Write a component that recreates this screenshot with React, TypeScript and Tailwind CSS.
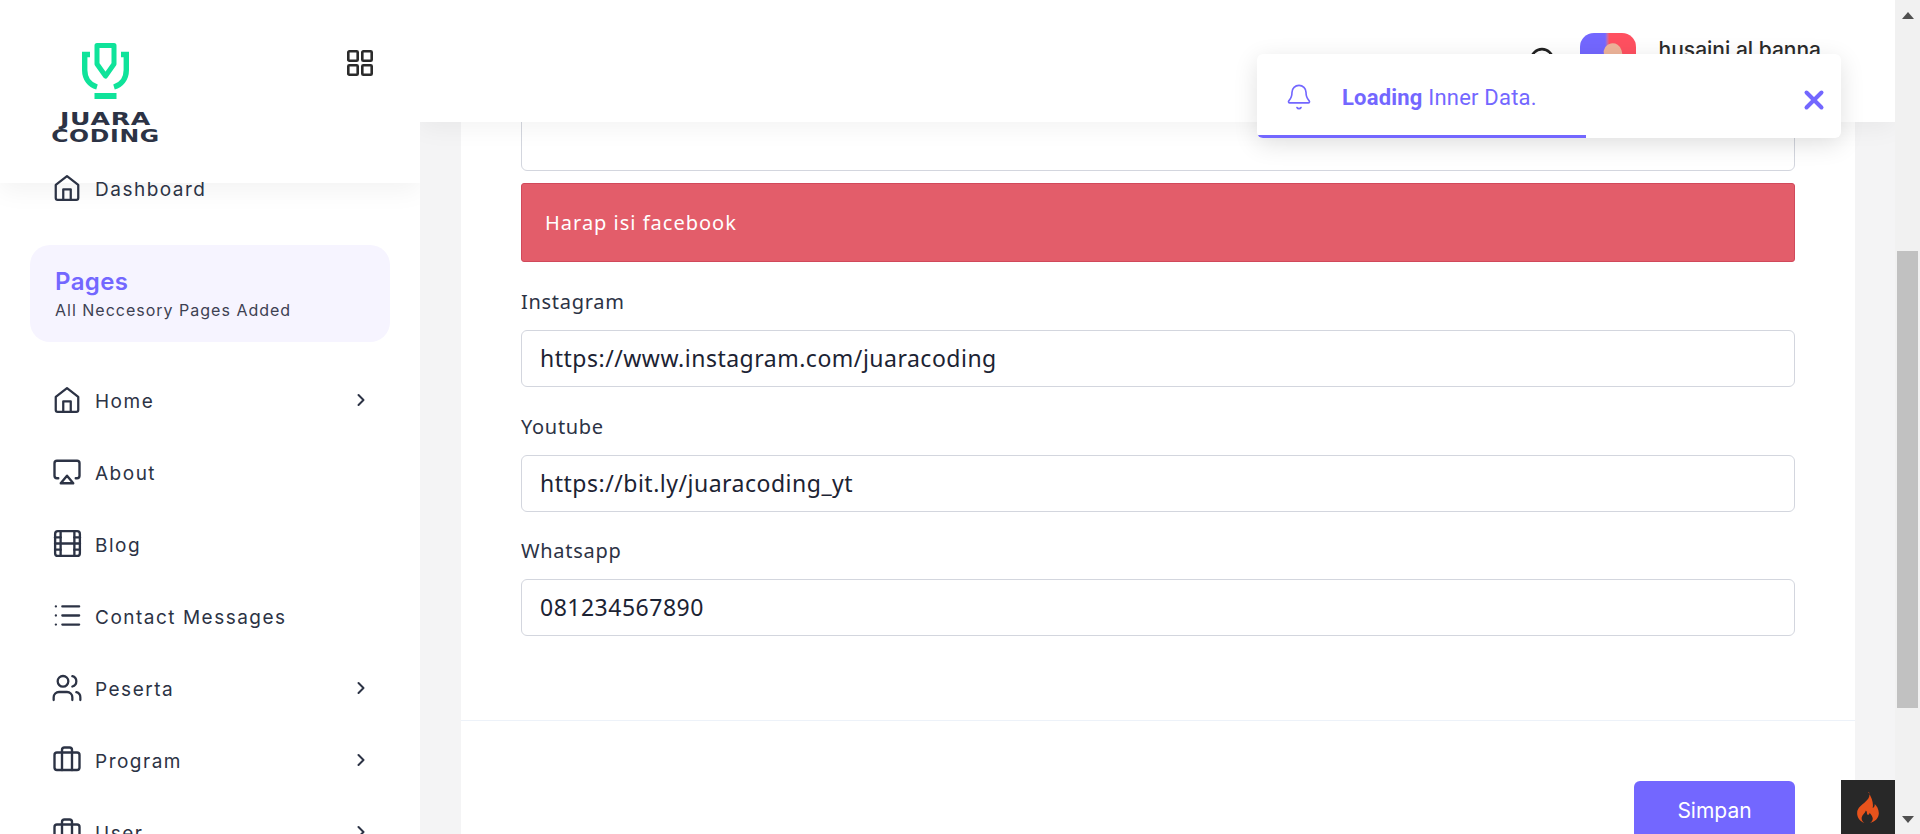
import { Airplay, Bell, Briefcase, ChevronRight, Film, List, Users, X } from "lucide-react"
import type { ReactNode } from "react"

function HomeIcon({ className }: { className?: string }) {
  return (
    <svg viewBox="0 0 24 24" fill="none" stroke="currentColor" strokeWidth="1.8" strokeLinejoin="round" strokeLinecap="round" className={className}>
      <path d="M12 2.500 3 9.500v10.500a1.500 1.500 0 0 0 1.500 1.500h15a1.500 1.500 0 0 0 1.500-1.500V9.500z" />
      <path d="M9 21.500V13h6v8.500" />
    </svg>
  )
}

function Logo() {
  return (
    <div className="flex w-[110px] flex-col items-center">
      <svg viewBox="0 0 47 56" className="h-[56px] w-[47px]" fill="none" stroke="#0fe39a">
        <path d="M15 2.500H32V21L23.500 33 15 21Z" strokeWidth="5" strokeLinejoin="round" />
        <path d="M8 11.500H2.700V27C2.700 36 8 42 15 44" strokeWidth="5.400" />
        <path d="M39 11.500H44.300V27C44.300 36 39 42 32 44" strokeWidth="5.400" />
        <rect x="12.500" y="50" width="22" height="6" fill="#0fe39a" stroke="none" />
      </svg>
      <div className="mt-[11px] text-center font-['DejaVu_Sans',sans-serif] text-[18px] leading-[17px] font-bold tracking-[0.5px] text-[#2c3345]">
        <div className="scale-x-[1.4]">JUARA</div>
        <div className="scale-x-[1.31]">CODING</div>
      </div>
    </div>
  )
}

function MenuItem({ icon, label, arrow }: { icon: ReactNode; label: string; arrow?: boolean }) {
  return (
    <div className="flex h-[72px] shrink-0 items-center pr-[49px] pl-[53px] text-[#2c3345]">
      <span className="-mt-[5px] flex h-[28px] w-[28px] items-center justify-center">{icon}</span>
      <span className="ml-[14px] flex-1 text-[19px] tracking-[1.5px]">{label}</span>
      {arrow && <ChevronRight className="-mt-[4px] h-[20px] w-[20px]" strokeWidth={2.4} />}
    </div>
  )
}

function Field({ label, value }: { label: string; value: string }) {
  return (
    <div className="mb-[25.5px]">
      <label className="mb-[14px] block text-[20px] leading-[28px] tracking-[0.7px] text-[#2c3345]">{label}</label>
      <div className="flex h-[57px] items-center rounded-[6px] border border-[#d3d6de] bg-white px-[18px] text-[23px] tracking-[0.5px] text-[#1c2333]">
        {value}
      </div>
    </div>
  )
}

export default function App() {
  return (
    <div className="relative flex h-screen w-full overflow-hidden bg-[#f4f4f5] font-['Noto_Sans',sans-serif]">
      <aside className="relative z-20 flex w-[420px] shrink-0 flex-col overflow-hidden bg-white font-['Inter',sans-serif]">
        <div className="flex h-[183px] shrink-0 items-start justify-between bg-white pt-[43px] pr-[47px] pl-[50px] shadow-[0_8px_24px_rgba(0,0,0,0.05)]">
          <Logo />
          <svg viewBox="0 0 26 26" fill="none" stroke="#2b2b2b" strokeWidth="2.600" className="mt-[7px] h-[26px] w-[26px]">
            <rect x="1.300" y="1.300" width="9.400" height="9.400" rx="1" />
            <rect x="15.300" y="1.300" width="9.400" height="9.400" rx="1" />
            <rect x="1.300" y="15.300" width="9.400" height="9.400" rx="1" />
            <rect x="15.300" y="15.300" width="9.400" height="9.400" rx="1" />
          </svg>
        </div>
        <div className="relative -mt-[21px] flex-1">
          <div className="flex h-[56px] items-center pl-[53px] text-[#2c3345]">
            <span className="-mt-[4px] flex h-[28px] w-[28px] items-center justify-center"><HomeIcon className="h-[30px] w-[30px] shrink-0" /></span>
            <span className="ml-[14px] text-[19px] tracking-[1.5px]">Dashboard</span>
          </div>
          <div className="mx-[30px] mt-[27px] flex h-[97px] flex-col justify-center rounded-[20px] bg-[#f6f4ff] px-[25px]">
            <div className="text-[24px] leading-[30px] font-semibold tracking-[0.4px] text-[#7367ff]">Pages</div>
            <div className="mt-[2px] text-[16px] leading-[22px] tracking-[1px] text-[#3d4152]">All Neccesory Pages Added</div>
          </div>
          <div className="mt-[24px] flex flex-col">
            <MenuItem icon={<HomeIcon className="h-[30px] w-[30px] shrink-0" />} label="Home" arrow />
            <MenuItem icon={<Airplay className="h-[30px] w-[30px] shrink-0" strokeWidth={1.9} />} label="About" />
            <MenuItem icon={<Film className="h-[33px] w-[33px] shrink-0" strokeWidth={1.7} />} label="Blog" />
            <MenuItem icon={<List className="h-[31px] w-[31px] shrink-0" strokeWidth={1.8} />} label="Contact Messages" />
            <MenuItem icon={<Users className="h-[32px] w-[32px] shrink-0" strokeWidth={1.7} />} label="Peserta" arrow />
            <MenuItem icon={<Briefcase className="h-[30px] w-[30px] shrink-0" strokeWidth={1.9} />} label="Program" arrow />
            <MenuItem icon={<Briefcase className="h-[30px] w-[30px] shrink-0" strokeWidth={1.9} />} label="User" arrow />
          </div>
        </div>
      </aside>

      <div className="flex min-w-0 flex-1 flex-col">
        <header className="relative z-10 flex h-[122px] shrink-0 items-start justify-end bg-white pt-[33px] pr-[74px] shadow-[0_6px_24px_rgba(0,0,0,0.05)]">
          <svg viewBox="0 0 24 24" fill="none" stroke="#222" strokeWidth="2.400" className="mt-[14px] mr-[25px] h-[26px] w-[26px]">
            <circle cx="12" cy="12" r="10" />
          </svg>
          <div className="relative h-[56px] w-[56px] overflow-hidden rounded-[14px] bg-gradient-to-r from-[#7367ff] from-45% to-[#ff5060] to-52%">
            <div className="absolute top-[10px] left-[26px] h-[40px] w-[18px] -rotate-12 rounded-full bg-[#eeb49a]" />
          </div>
          <div className="mt-[3px] ml-[23px] font-['Inter',sans-serif] text-[21px] leading-[28px] font-medium text-[#2b2b2b]">husaini al banna</div>
        </header>

        <main className="-mt-[9px] mr-[40px] ml-[41px] flex-1 bg-white">
          <div className="px-[60px]">
            <div className="h-[58px] rounded-[6px] border border-[#d3d6de] bg-white" />
            <div className="mt-[12px] flex h-[79px] items-center rounded-[3px] border border-[#d1495b] bg-[#e35d6a] px-[23px] text-[20px] tracking-[1px] text-white">
              Harap isi facebook
            </div>
            <div className="mt-[26px]">
              <Field label="Instagram" value="https://www.instagram.com/juaracoding" />
              <Field label="Youtube" value="https://bit.ly/juaracoding_yt" />
              <Field label="Whatsapp" value="081234567890" />
            </div>
          </div>
          <div className="mt-[84px] border-t border-[#edf2f9] px-[60px] pt-[60px]">
            <div className="flex justify-end">
              <button className="h-[60px] w-[161px] rounded-[6px] bg-[#7367ff] font-['Inter',sans-serif] text-[21px] text-white">Simpan</button>
            </div>
          </div>
        </main>
      </div>

      <div className="relative z-30 flex w-[25px] shrink-0 flex-col items-center bg-[#f1f1f1]">
        <div className="mt-[12px] h-0 w-0 border-x-[6px] border-b-[7px] border-x-transparent border-b-[#505050]" />
        <div className="mt-[232px] h-[457px] w-[21px] bg-[#c1c1c1]" />
        <div className="mt-[108px] h-0 w-0 border-x-[6px] border-t-[7px] border-x-transparent border-t-[#505050]" />
      </div>

      <div className="absolute right-[25px] bottom-0 z-40 flex h-[54px] w-[54px] items-center justify-center bg-[#282828]">
        <svg viewBox="0 0 24 30" className="h-[31px] w-[25px]">
          <path fill="#e8531c" d="M12.500 0c1.500 4.500-1 7-3.500 9.500C6 12.500 1 15 1 20.500c0 4 2.500 7.500 7 9.500-2-1.500-3-3.500-2.500-5.500.5-2.500 3-3.500 4-6.500 1.500 1 .5 3 1.500 4 1 .5 2-.5 2-2 2 2 3.500 4.500 3 6.500-.3 1.500-1.500 3-3 3.500 5-1 9-4.500 9-9.500 0-4-2-7-4-9 .2 2-.5 3.500-2 4 1-4.500-.5-9.500-4.500-16z" />
        </svg>
      </div>

      <div className="absolute top-[54px] left-[1257px] z-40 h-[84px] w-[584px] overflow-hidden rounded-[6px] bg-white font-['Roboto',sans-serif] text-[#7367ff] shadow-[0_6px_24px_rgba(0,0,0,0.12)]">
        <div className="flex h-[81px] items-center pt-[5px] pr-[12px] pl-[28px]">
          <Bell className="h-[28px] w-[28px]" strokeWidth={1.4} />
          <span className="ml-[29px] flex-1 text-[22px] tracking-[0.2px]"><b className="font-bold">Loading</b> Inner Data.</span>
          <X className="mt-[6px] h-[30px] w-[30px]" strokeWidth={3.2} />
        </div>
        <div className="h-[3px] w-[329px] bg-[#7367ff]" />
      </div>
    </div>
  )
}
